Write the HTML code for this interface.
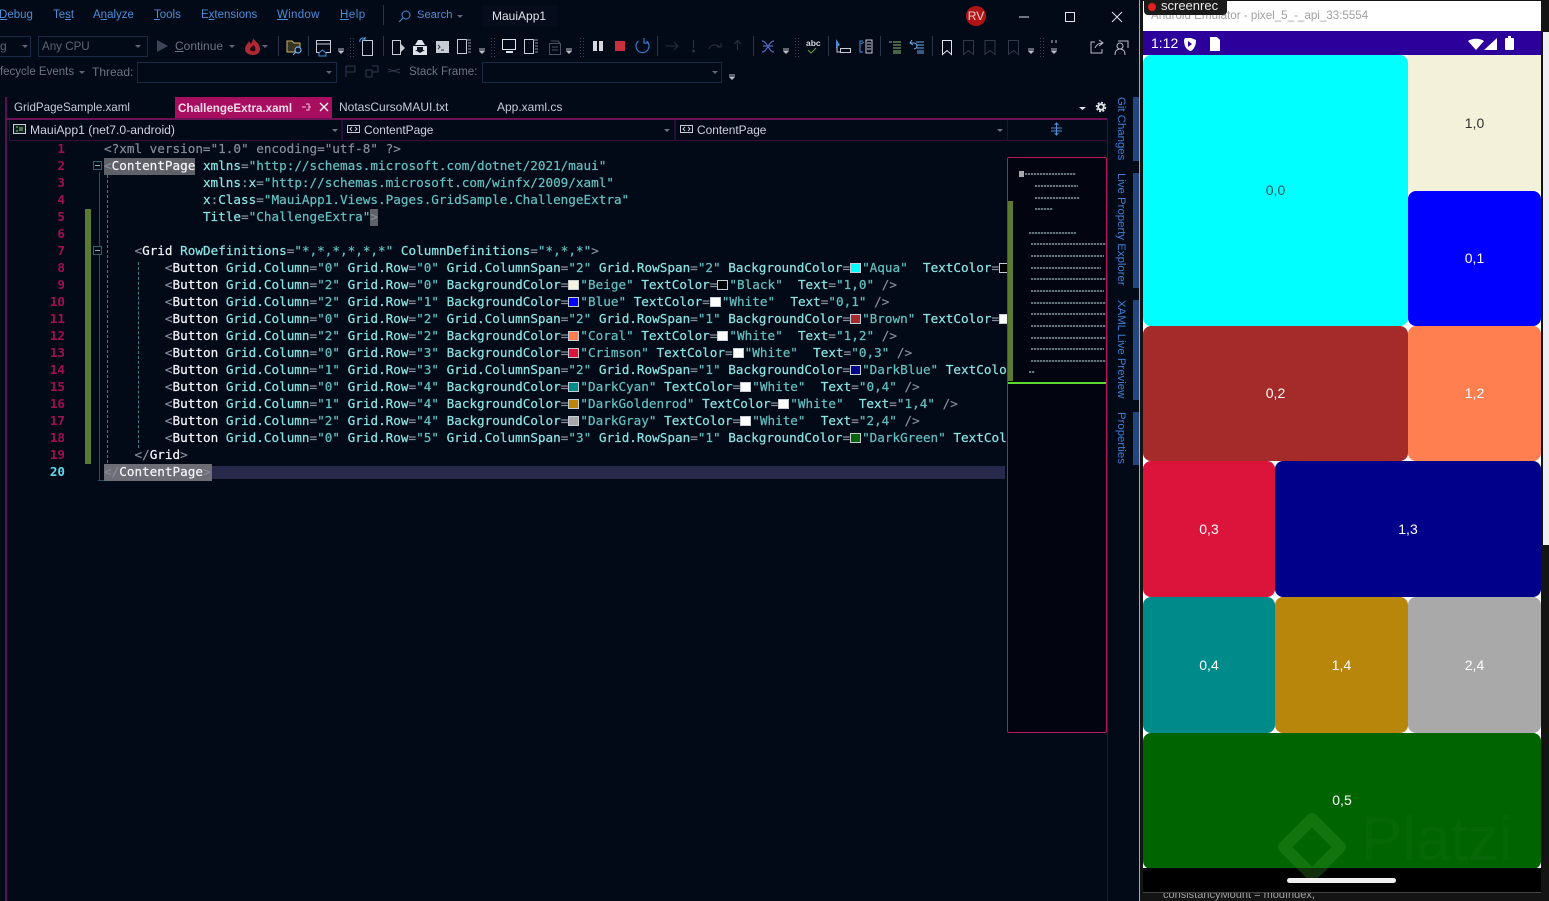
<!DOCTYPE html>
<html><head><meta charset="utf-8"><title>MauiApp1</title>
<style>
html,body{margin:0;padding:0;width:1549px;height:901px;overflow:hidden;background:#020917}
*{box-sizing:border-box}
.a{position:absolute;white-space:nowrap}
body{font-family:"Liberation Sans",sans-serif;font-size:12px;color:#8f97a8}
.m{color:#4a8fd8;top:9px;font-size:11.5px}
.d{color:#5d6677}
.box{position:absolute;border:1px solid #1b2a44}
#code{position:absolute;left:104px;top:139px;width:903px;height:345px;overflow:hidden;font-family:"DejaVu Sans Mono","Liberation Mono",monospace;font-size:12.65px;color:#64c4c4;-webkit-text-stroke:.2px}
.l{position:absolute;left:0;height:17px;line-height:17px;white-space:pre}
.p{color:#858c9a}.e{color:#f4f5f8}.t{color:#8ce4e4}.v{color:#64c0c0}
.s{display:inline-block;width:11px;height:10px;margin:0 1px -1px 0;border:1px solid #c8ccd4;vertical-align:baseline}
.n{position:absolute;left:19px;width:46px;text-align:right;height:17px;line-height:17px;font-family:"DejaVu Sans Mono",monospace;font-size:12.6px;font-weight:bold;color:#a0104f}
.g{position:absolute;display:flex;align-items:center;justify-content:center;border-radius:8px;color:#fff;font-size:14px}
.up{padding-bottom:2px}
.side{position:absolute;writing-mode:vertical-rl;color:#3f80d6;font-size:11.4px;white-space:nowrap}
.sb{position:absolute;left:1133px;width:6px;background:#24467f}
.mini{position:absolute;height:2px;opacity:.6;background:repeating-linear-gradient(90deg,#a5bcc0 0 2px,rgba(60,85,90,.6) 2px 3px)}
</style></head><body>

<!-- menu -->
<div class="a m" style="left:-1px"><u>D</u>ebug</div>
<div class="a m" style="left:53px">Te<u>s</u>t</div>
<div class="a m" style="left:93px">A<u>n</u>alyze</div>
<div class="a m" style="left:154px"><u>T</u>ools</div>
<div class="a m" style="left:201px">E<u>x</u>tensions</div>
<div class="a m" style="left:277px;letter-spacing:.3px"><u>W</u>indow</div>
<div class="a m" style="left:340px;letter-spacing:.5px"><u>H</u>elp</div>
<div class="a" style="left:383px;top:5px;width:1px;height:20px;background:#2a3448"></div>
<div class="a m" style="left:417px;font-size:11.2px">Search</div>
<div class="a" style="left:482px;top:5px;width:76px;height:22px;background:#050d1c;color:#dfe3ea;padding:4px 10px;font-size:12px">MauiApp1</div>
<div class="a" style="left:966px;top:6px;width:20px;height:20px;border-radius:50%;background:#b01414;color:#f2d0d0;font-size:12px;text-align:center;line-height:20px">RV</div>

<!-- toolbar rows -->
<div class="box" style="left:-2px;top:36px;width:33px;height:21px"></div>
<div class="a d" style="left:0;top:39px;font-size:12px">g</div>
<div class="box" style="left:38px;top:36px;width:110px;height:21px"></div>
<div class="a d" style="left:42px;top:40px;font-size:11.6px">Any CPU</div>
<div class="a d" style="left:175px;top:39px;color:#6c7485"><u>C</u>ontinue</div>
<div class="a d" style="left:-9px;top:66px;color:#6c7485;font-size:11.5px">Lifecycle Events</div>
<div class="a d" style="left:92px;top:65px;color:#6c7485">Thread:</div>
<div class="box" style="left:137px;top:62px;width:200px;height:21px"></div>
<div class="a d" style="left:409px;top:66px;color:#6c7485;font-size:11.5px">Stack Frame:</div>
<div class="box" style="left:482px;top:62px;width:240px;height:21px"></div>

<svg class="a" style="left:0;top:0" width="1140" height="140" viewBox="0 0 1140 140" fill="none">
 <circle cx="406" cy="15" r="4" stroke="#4a8fd8"/><path d="M403 18l-4 4" stroke="#4a8fd8"/>
 <path d="M1019 17h10" stroke="#dfe3ea"/><rect x="1065.500" y="12.500" width="9" height="9" stroke="#dfe3ea"/><path d="M1112 12l10 10M1122 12l-10 10" stroke="#dfe3ea"/>
 <!-- dropdown arrows -->
 <path d="M22 45h6l-3 3zM135 45h6l-3 3zM229 45h6l-3 3zM262 45h6l-3 3zM79 71h6l-3 3zM326 71h6l-3 3zM712 71h6l-3 3zM457 15h6l-3 3z" fill="#5c6678"/>
 <path d="M157 40l11 6-11 6z" fill="#3a4557"/>
 <path d="M253 38c2 4 7 5 7 11 0 4-3 6-7 6s-8-2-8-6c0-4 3-5 4-8 1 1 1 2 2 3 1-2 2-4 2-6z" fill="#b02a35"/><path d="M253 45c2 1 3 3 2 6-2 1-5 0-5-2 0-2 3-2 3-4z" fill="#2a0a12"/>
 <!-- separators -->
 <path d="M278.500 36v20M308.500 36v20M383.500 36v20M657.500 36v20M753.500 36v20M828.500 36v20M880.500 36v20M932.500 36v20" stroke="#2a3448"/>
 <!-- grips -->
 <path d="M350.500 38v19M353.500 38v19M491.500 38v19M494.500 38v19M580.500 38v19M583.500 38v19M795.500 38v19M798.500 38v19M1040.500 38v19M1043.500 38v19" stroke="#3a4557" stroke-dasharray="1 2"/>
 <!-- small overflow arrows -->
 <path d="M338 49h6M338 51h6M339 52h4M340 53h2M479 49h6M479 51h6M480 52h4M481 53h2M566 49h6M566 51h6M567 52h4M568 53h2M783 49h6M783 51h6M784 52h4M785 53h2M1028 49h6M1028 51h6M1029 52h4M1030 53h2M1051 49h6M1051 51h6M1052 52h4M1053 53h2M729 75h6M729 77h6M730 78h4M731 79h2" stroke="#b9bec8"/>
 <path d="M1052 40v3M1056 40v3" stroke="#b9bec8"/>
 <!-- folder -->
 <path d="M287 41h5l2 2h6v9h-13z" fill="#3a3520" stroke="#c8b26d"/><circle cx="298" cy="50" r="3" stroke="#6fb0ec" stroke-width="1.200" fill="#0a1424"/><path d="M296 52l-3 3" stroke="#6fb0ec"/>
 <!-- window -->
 <rect x="316.500" y="40.500" width="14" height="12" stroke="#c8ccd4"/><path d="M317 44h13" stroke="#c8ccd4"/><path d="M319 53l3.500-3 3.500 3v3h-7z" stroke="#4a8fd8" fill="#020917"/>
 <rect x="362.500" y="40.500" width="10" height="15" stroke="#c8ccd4"/><path d="M360 42a3 3 0 0 1 5-3M365 37v3h-3" stroke="#5aa0e8" fill="#020917"/>
 <rect x="392.500" y="40.500" width="8" height="14" stroke="#c8ccd4"/><path d="M401 44l4 4-4 4z" fill="#c8ccd4"/>
 <path d="M413 46h14v9h-14z" fill="#dfe3ea"/><path d="M415 45l3-5h4l3 5z" fill="#dfe3ea"/><path d="M417 47h6v3h2l-5 3-5-3h2z" fill="#101624"/>
 <rect x="436" y="41" width="13" height="12" fill="#c8ccd4"/><path d="M438 45l2 2-2 2M441 50h3" stroke="#2a3448"/>
 <rect x="457.500" y="39.500" width="9" height="14" stroke="#c8ccd4"/><path d="M466 40h5M468 43h3M468 46h3M468 49h3M468 52h3" stroke="#8a93a3"/>
 <rect x="502.500" y="39.500" width="13" height="10" stroke="#dfe3ea"/><path d="M506 52h7" stroke="#dfe3ea" stroke-width="2"/>
 <rect x="524.500" y="39.500" width="9" height="14" stroke="#c8ccd4"/><path d="M533 40h5M535 43h3M535 46h3M535 49h3M535 52h3" stroke="#8a93a3"/>
 <rect x="549.500" y="43.500" width="11" height="11" stroke="#4a5365"/><path d="M551 41h7l2 2M552 47h6M552 50h6" stroke="#4a5365"/>
 <rect x="593" y="41" width="4" height="10" fill="#d5d8de"/><rect x="599" y="41" width="4" height="10" fill="#d5d8de"/>
 <rect x="615" y="41" width="10" height="10" fill="#c7303c"/>
 <path d="M638.500 41a6.500 6.500 0 1 0 8 0M644 38v5h4" stroke="#3a78c8" stroke-width="1.200"/>
 <path d="M666 46h12M674 42l4 4-4 4M693.500 40v8M737.500 41v9M734 44l3.500-3.500 3.500 3.500M709 49c2-5 7-5 11-2M721 43v4h-4" stroke="#263245"/>
 <circle cx="693.500" cy="51" r="1.500" fill="#263245"/>
 <path d="M762 41c5 0 7 11 12 11M762 52c5 0 7-11 12-11M763 46h10" stroke="#4d6ab8" stroke-width="1.200"/>
 <text x="806" y="46" font-size="8.500" fill="#d5d8de" font-family="Liberation Sans" font-weight="bold">abc</text><path d="M808 50l3 3 5-5" stroke="#63a04a"/>
 <path d="M836 39v9l4-3z" fill="#4a8fd8"/><rect x="840.500" y="48.500" width="10" height="4" stroke="#c8ccd4"/><path d="M837 47v5h3" stroke="#c8ccd4"/>
 <path d="M863 41h-3v11h3M861 44l3-2" stroke="#4a8fd8"/><path d="M866 40h6v13h-6zM867 43h4M867 46h4M867 49h4" stroke="#c8ccd4"/>
 <path d="M889 42h3M893 42h8M893 45h8M893 48h8M893 51h8M893 53h8" stroke="#8fbe7a"/>
 <path d="M912 40l-2 3 3 2M910 43h4a3 3 0 0 1 0 6M916 42h8M917 45h7M917 48h7M917 51h7M917 53h7" stroke="#6fa8e8"/>
 <path d="M942.500 40.500h9v14l-4.500-4-4.500 4z" stroke="#dfe3ea"/>
 <path d="M963.500 40.500h10v14l-5-4-5 4zM985 40.500h10v14l-5-4-5 4zM1008.500 40.500h10v14l-5-4-5 4z" stroke="#2f3a4d"/>
 <path d="M1095 42h-4v11h11v-4M1095 48c1-3 4-5 7-5M1099 40l4 3-4 3" stroke="#b9bec8"/>
 <path d="M1118 41h10v7M1115 55c0-4 2-6 5-6s5 2 5 6" stroke="#b9bec8"/><circle cx="1120" cy="46" r="3" stroke="#b9bec8"/>
 <path d="M346 66v11M346 66h9v6h-9M366 70h6v7h-6zM372 66h6v6h-6M388 72l12-3M388 69l12 4" stroke="#2f3a4d"/>
 <path d="M1079 107h7l-3.500 3z" fill="#e0e2e8"/>
 <circle cx="1101" cy="107" r="2.800" stroke="#e0e2e8" stroke-width="2"/><circle cx="1101" cy="107" r="4.500" stroke="#e0e2e8" stroke-width="1.500" stroke-dasharray="2 1.500"/>
 <path d="M302 107h4M305.500 105h3v5h-3M308 107.500h2" stroke="#f3c0d8"/>
 <path d="M320 103l8 8M328 103l-8 8" stroke="#fff" stroke-width="1.300"/>
 <path d="M1056.500 123v12M1051 128h11M1051 131h11M1054.500 125l2-2 2 2M1054.500 133l2 2 2-2" stroke="#4a8fd8"/>
 <path d="M1053 151h8l-4-5z" fill="#9a1460"/>
 <path d="M332 129h6l-3 3zM664 129h6l-3 3zM997 129h6l-3 3z" fill="#6c7485"/>
 <rect x="13.500" y="124.500" width="12" height="9" stroke="#c8ccd4" fill="#102020"/><path d="M16 127h2M16 131h2M20 127v4M22 127v4" stroke="#7fd08a"/>
 <rect x="347.500" y="125.500" width="12" height="7" stroke="#c8ccd4"/><path d="M352 127l-2 2 2 2M355 127l2 2-2 2" stroke="#c8ccd4"/>
 <rect x="680.500" y="125.500" width="12" height="7" stroke="#c8ccd4"/><path d="M685 127l-2 2 2 2M688 127l2 2-2 2" stroke="#c8ccd4"/>
</svg>

<!-- tabs -->
<div class="a" style="left:14px;top:101px;color:#c4ccd8;font-size:11.6px">GridPageSample.xaml</div>
<div class="a" style="left:175px;top:97px;width:157px;height:22px;background:#a80e60;color:#f4dbe8;font-size:11.6px;font-weight:bold;padding:5px 3px">ChallengeExtra.xaml</div>
<svg class="a" style="left:296px;top:100px" width="36" height="16" fill="none"><path d="M6 7h4M10 4h3v6h-3M13 7h2" stroke="#f3c0d8"/><path d="M24 3l8 8M32 3l-8 8" stroke="#fff" stroke-width="1.300"/></svg>
<div class="a" style="left:339px;top:100px;color:#c4ccd8;font-size:12px">NotasCursoMAUI.txt</div>
<div class="a" style="left:497px;top:100px;color:#c4ccd8;font-size:12px">App.xaml.cs</div>

<!-- frame -->
<div class="a" style="left:5px;top:97px;width:2px;height:804px;background:#5a1050"></div>
<div class="a" style="left:5px;top:118px;width:1103px;height:2px;background:#6a1258"></div>
<div class="a" style="left:9px;top:140px;width:1099px;height:1px;background:#3a0c40"></div>
<div class="a" style="left:1107px;top:118px;width:1px;height:783px;background:#3a0c40"></div>
<div class="a" style="left:9px;top:120px;width:1px;height:20px;background:#3a0c40"></div>
<div class="a" style="left:341px;top:120px;width:2px;height:20px;background:#2a0c3c"></div>
<div class="a" style="left:674px;top:120px;width:2px;height:20px;background:#2a0c3c"></div>
<div class="a" style="left:1007px;top:120px;width:1px;height:20px;background:#2a0c3c"></div>

<div class="a" style="left:30px;top:123px;color:#cdd3dd;font-size:12.2px">MauiApp1 (net7.0-android)</div>
<div class="a" style="left:364px;top:123px;color:#cdd3dd;font-size:11.9px">ContentPage</div>
<div class="a" style="left:697px;top:123px;color:#cdd3dd;font-size:11.9px">ContentPage</div>

<!-- gutter -->
<div class="a" style="left:85px;top:209px;width:6px;height:255px;background:#5b7a32"></div>
<div class="a" style="left:98.500px;top:172px;width:1px;height:308px;background:#1f5560"></div>
<div class="a" style="left:98px;top:480px;width:6px;height:1px;background:#1f5560"></div>
<div class="a" style="left:107px;top:175px;width:0;height:288px;border-left:1px dashed #3c7f88"></div>
<div class="a" style="left:138px;top:262px;width:0;height:186px;border-left:1px dashed #3c7f88"></div>
<div class="a" style="left:93px;top:161px;width:9px;height:9px;border:1px solid #2a6570;background:#020917"></div>
<div class="a" style="left:95px;top:165px;width:5px;height:1px;background:#7fb8c0"></div>
<div class="a" style="left:93px;top:246px;width:9px;height:9px;border:1px solid #2a6570;background:#020917"></div>
<div class="a" style="left:95px;top:250px;width:5px;height:1px;background:#7fb8c0"></div>

<div class="n" style="top:140px">1</div><div class="n" style="top:157px">2</div><div class="n" style="top:174px">3</div><div class="n" style="top:191px">4</div><div class="n" style="top:208px">5</div><div class="n" style="top:225px">6</div><div class="n" style="top:242px">7</div><div class="n" style="top:259px">8</div><div class="n" style="top:276px">9</div><div class="n" style="top:293px">10</div><div class="n" style="top:310px">11</div><div class="n" style="top:327px">12</div><div class="n" style="top:344px">13</div><div class="n" style="top:361px">14</div><div class="n" style="top:378px">15</div><div class="n" style="top:395px">16</div><div class="n" style="top:412px">17</div><div class="n" style="top:429px">18</div><div class="n" style="top:446px">19</div><div class="n" style="top:463px;color:#5fdcec">20</div>

<!-- highlights -->
<div class="a" style="left:104px;top:466px;width:901px;height:13px;background:#28294a"></div>
<div class="a" style="left:104px;top:158px;width:91px;height:17px;background:#5f6168"></div>
<div class="a" style="left:370px;top:209px;width:8px;height:17px;background:#5f6168"></div>
<div class="a" style="left:104px;top:464px;width:108px;height:17px;background:#6c6d75"></div>

<div id="code">
<div class="l" style="top:1px;color:#858c9a">&lt;?xml version="1.0" encoding="utf-8" ?&gt;</div>
<div class="l" style="top:18px"><span class="p">&lt;</span><span class="e">ContentPage</span> <span class="t">xmlns</span><span class="p">=</span><span class="v">"http://schemas.microsoft.com/dotnet/2021/maui"</span></div>
<div class="l" style="top:35px">             <span class="t">xmlns</span><span class="p">:</span><span class="t">x</span><span class="p">=</span><span class="v">"http://schemas.microsoft.com/winfx/2009/xaml"</span></div>
<div class="l" style="top:52px">             <span class="t">x</span><span class="p">:</span><span class="t">Class</span><span class="p">=</span><span class="v">"MauiApp1.Views.Pages.GridSample.ChallengeExtra"</span></div>
<div class="l" style="top:69px">             <span class="t">Title</span><span class="p">=</span><span class="v">"ChallengeExtra"</span><span class="p">&gt;</span></div>
<div class="l" style="top:103px">    <span class="p">&lt;</span><span class="e">Grid</span> <span class="t">RowDefinitions</span><span class="p">=</span><span class="v">"*,*,*,*,*,*"</span> <span class="t">ColumnDefinitions</span><span class="p">=</span><span class="v">"*,*,*"</span><span class="p">&gt;</span></div>
<div class="l" style="top:120px">        <span class="p">&lt;</span><span class="e">Button</span> <span class="t">Grid.Column</span><span class="p">=</span><span class="v">"0"</span> <span class="t">Grid.Row</span><span class="p">=</span><span class="v">"0"</span> <span class="t">Grid.ColumnSpan</span><span class="p">=</span><span class="v">"2"</span> <span class="t">Grid.RowSpan</span><span class="p">=</span><span class="v">"2"</span> <span class="t">BackgroundColor</span><span class="p">=</span><span class="s" style="background:#0ff"></span><span class="v">"Aqua"</span>  <span class="t">TextColor</span><span class="p">=</span><span class="s" style="background:#000"></span><span class="v">"Black"</span></div>
<div class="l" style="top:137px">        <span class="p">&lt;</span><span class="e">Button</span> <span class="t">Grid.Column</span><span class="p">=</span><span class="v">"2"</span> <span class="t">Grid.Row</span><span class="p">=</span><span class="v">"0"</span> <span class="t">BackgroundColor</span><span class="p">=</span><span class="s" style="background:#f5f5dc"></span><span class="v">"Beige"</span> <span class="t">TextColor</span><span class="p">=</span><span class="s" style="background:#000"></span><span class="v">"Black"</span>  <span class="t">Text</span><span class="p">=</span><span class="v">"1,0"</span> <span class="p">/&gt;</span></div>
<div class="l" style="top:154px">        <span class="p">&lt;</span><span class="e">Button</span> <span class="t">Grid.Column</span><span class="p">=</span><span class="v">"2"</span> <span class="t">Grid.Row</span><span class="p">=</span><span class="v">"1"</span> <span class="t">BackgroundColor</span><span class="p">=</span><span class="s" style="background:#00f"></span><span class="v">"Blue"</span> <span class="t">TextColor</span><span class="p">=</span><span class="s" style="background:#fff"></span><span class="v">"White"</span>  <span class="t">Text</span><span class="p">=</span><span class="v">"0,1"</span> <span class="p">/&gt;</span></div>
<div class="l" style="top:171px">        <span class="p">&lt;</span><span class="e">Button</span> <span class="t">Grid.Column</span><span class="p">=</span><span class="v">"0"</span> <span class="t">Grid.Row</span><span class="p">=</span><span class="v">"2"</span> <span class="t">Grid.ColumnSpan</span><span class="p">=</span><span class="v">"2"</span> <span class="t">Grid.RowSpan</span><span class="p">=</span><span class="v">"1"</span> <span class="t">BackgroundColor</span><span class="p">=</span><span class="s" style="background:#a52a2a"></span><span class="v">"Brown"</span> <span class="t">TextColor</span><span class="p">=</span><span class="s" style="background:#fff"></span><span class="v">"White"</span></div>
<div class="l" style="top:188px">        <span class="p">&lt;</span><span class="e">Button</span> <span class="t">Grid.Column</span><span class="p">=</span><span class="v">"2"</span> <span class="t">Grid.Row</span><span class="p">=</span><span class="v">"2"</span> <span class="t">BackgroundColor</span><span class="p">=</span><span class="s" style="background:#ff7f50"></span><span class="v">"Coral"</span> <span class="t">TextColor</span><span class="p">=</span><span class="s" style="background:#fff"></span><span class="v">"White"</span>  <span class="t">Text</span><span class="p">=</span><span class="v">"1,2"</span> <span class="p">/&gt;</span></div>
<div class="l" style="top:205px">        <span class="p">&lt;</span><span class="e">Button</span> <span class="t">Grid.Column</span><span class="p">=</span><span class="v">"0"</span> <span class="t">Grid.Row</span><span class="p">=</span><span class="v">"3"</span> <span class="t">BackgroundColor</span><span class="p">=</span><span class="s" style="background:#dc143c"></span><span class="v">"Crimson"</span> <span class="t">TextColor</span><span class="p">=</span><span class="s" style="background:#fff"></span><span class="v">"White"</span>  <span class="t">Text</span><span class="p">=</span><span class="v">"0,3"</span> <span class="p">/&gt;</span></div>
<div class="l" style="top:222px">        <span class="p">&lt;</span><span class="e">Button</span> <span class="t">Grid.Column</span><span class="p">=</span><span class="v">"1"</span> <span class="t">Grid.Row</span><span class="p">=</span><span class="v">"3"</span> <span class="t">Grid.ColumnSpan</span><span class="p">=</span><span class="v">"2"</span> <span class="t">Grid.RowSpan</span><span class="p">=</span><span class="v">"1"</span> <span class="t">BackgroundColor</span><span class="p">=</span><span class="s" style="background:#00008b"></span><span class="v">"DarkBlue"</span> <span class="t">TextColor</span><span class="p">=</span></div>
<div class="l" style="top:239px">        <span class="p">&lt;</span><span class="e">Button</span> <span class="t">Grid.Column</span><span class="p">=</span><span class="v">"0"</span> <span class="t">Grid.Row</span><span class="p">=</span><span class="v">"4"</span> <span class="t">BackgroundColor</span><span class="p">=</span><span class="s" style="background:#008b8b"></span><span class="v">"DarkCyan"</span> <span class="t">TextColor</span><span class="p">=</span><span class="s" style="background:#fff"></span><span class="v">"White"</span>  <span class="t">Text</span><span class="p">=</span><span class="v">"0,4"</span> <span class="p">/&gt;</span></div>
<div class="l" style="top:256px">        <span class="p">&lt;</span><span class="e">Button</span> <span class="t">Grid.Column</span><span class="p">=</span><span class="v">"1"</span> <span class="t">Grid.Row</span><span class="p">=</span><span class="v">"4"</span> <span class="t">BackgroundColor</span><span class="p">=</span><span class="s" style="background:#b8860b"></span><span class="v">"DarkGoldenrod"</span> <span class="t">TextColor</span><span class="p">=</span><span class="s" style="background:#fff"></span><span class="v">"White"</span>  <span class="t">Text</span><span class="p">=</span><span class="v">"1,4"</span> <span class="p">/&gt;</span></div>
<div class="l" style="top:273px">        <span class="p">&lt;</span><span class="e">Button</span> <span class="t">Grid.Column</span><span class="p">=</span><span class="v">"2"</span> <span class="t">Grid.Row</span><span class="p">=</span><span class="v">"4"</span> <span class="t">BackgroundColor</span><span class="p">=</span><span class="s" style="background:#a9a9a9"></span><span class="v">"DarkGray"</span> <span class="t">TextColor</span><span class="p">=</span><span class="s" style="background:#fff"></span><span class="v">"White"</span>  <span class="t">Text</span><span class="p">=</span><span class="v">"2,4"</span> <span class="p">/&gt;</span></div>
<div class="l" style="top:290px">        <span class="p">&lt;</span><span class="e">Button</span> <span class="t">Grid.Column</span><span class="p">=</span><span class="v">"0"</span> <span class="t">Grid.Row</span><span class="p">=</span><span class="v">"5"</span> <span class="t">Grid.ColumnSpan</span><span class="p">=</span><span class="v">"3"</span> <span class="t">Grid.RowSpan</span><span class="p">=</span><span class="v">"1"</span> <span class="t">BackgroundColor</span><span class="p">=</span><span class="s" style="background:#006400"></span><span class="v">"DarkGreen"</span> <span class="t">TextColor</span><span class="p">=</span></div>
<div class="l" style="top:307px">    <span class="p">&lt;/</span><span class="e">Grid</span><span class="p">&gt;</span></div>
<div class="l" style="top:324px"><span class="p">&lt;/</span><span class="e">ContentPage</span><span class="p">&gt;</span></div>
</div>

<!-- minimap -->
<div class="a" style="left:1007px;top:157px;width:100px;height:576px;border:1px solid #b8175f;border-radius:2px;background:#02050f;overflow:hidden">
 <div class="a" style="left:0;top:43px;width:5px;height:180px;background:#5b7a32"></div>
 <div class="a" style="left:0;top:224px;width:98px;height:2px;background:#5ed82f"></div>
 <div class="a" style="left:11px;top:13px;width:5px;height:6px;background:#a8a8a8"></div>
 <div class="mini" style="left:17px;top:15px;width:51px"></div>
 <div class="mini" style="left:27px;top:27px;width:43px"></div>
 <div class="mini" style="left:27px;top:39px;width:45px"></div>
 <div class="mini" style="left:27px;top:50px;width:18px"></div>
 <div class="mini" style="left:21px;top:74px;width:47px"></div>
 <div class="mini" style="left:23px;top:85px;width:75px"></div>
 <div class="mini" style="left:23px;top:97px;width:73px"></div>
 <div class="mini" style="left:23px;top:109px;width:70px"></div>
 <div class="mini" style="left:23px;top:120px;width:75px"></div>
 <div class="mini" style="left:23px;top:132px;width:73px"></div>
 <div class="mini" style="left:23px;top:144px;width:75px"></div>
 <div class="mini" style="left:23px;top:155px;width:75px"></div>
 <div class="mini" style="left:23px;top:167px;width:75px"></div>
 <div class="mini" style="left:23px;top:179px;width:75px"></div>
 <div class="mini" style="left:23px;top:190px;width:73px"></div>
 <div class="mini" style="left:23px;top:202px;width:75px"></div>
 <div class="mini" style="left:21px;top:213px;width:6px"></div>
</div>

<!-- side tabs -->
<div class="sb" style="top:97px;height:64px"></div>
<div class="sb" style="top:173px;height:115px"></div>
<div class="sb" style="top:300px;height:100px"></div>
<div class="sb" style="top:412px;height:53px"></div>
<div class="side" style="left:1115px;top:97px">Git Changes</div>
<div class="side" style="left:1115px;top:173px">Live Property Explorer</div>
<div class="side" style="left:1115px;top:300px">XAML Live Preview</div>
<div class="side" style="left:1115px;top:412px">Properties</div>

<!-- emulator -->
<div class="a" style="left:1139px;top:0;width:1px;height:901px;background:#9fb08a"></div>
<div class="a" style="left:1140px;top:0;width:409px;height:901px;background:#141414"></div>
<div class="a" style="left:1163px;top:889px;color:#a0a0a0;font-size:11px">consistancyMount = modIndex,</div>
<div class="a" style="left:1543px;top:32px;width:6px;height:513px;background:#eeeef3"></div>
<div class="a" style="left:1143px;top:1px;width:398px;height:30px;background:#fff"></div>
<div class="a" style="left:1151px;top:9px;color:#a0a0a0;font-size:11.6px">Android Emulator - pixel_5_-_api_33:5554</div>
<div class="a" style="left:1144px;top:0;width:83px;height:15px;background:#1b1b1b;border-radius:0 0 4px 4px;color:#e8e8e8;font-size:13px;line-height:12px;padding-left:17px">screenrec</div>
<div class="a" style="left:1148px;top:3px;width:8px;height:8px;border-radius:50%;background:#e02020"></div>
<div class="a" style="left:1143px;top:31px;width:398px;height:24px;background:#2c009a"></div>
<div class="a" style="left:1151px;top:35px;color:#fff;font-size:14px">1:12</div>
<svg class="a" style="left:1143px;top:31px" width="398" height="24" fill="#fff">
 <path d="M42 7h6l5 2c0 6-2 9-5 11h-1c-4-2-6-5-6-11z"/><path d="M45 10l4 3-4 3z" fill="#2c009a"/>
 <path d="M67 6h7l3 3v11h-10z"/>
 <path d="M325 10c4-3 12-3 16 0l-8 9z"/>
 <path d="M341 19l13-12v12z"/>
 <rect x="362" y="7" width="9" height="12" rx="1"/><rect x="365" y="5" width="3" height="2"/>
</svg>
<div class="a" style="left:1143px;top:55px;width:398px;height:814px;background:#fff"></div>
<div class="g up" style="left:1143px;top:55px;width:265px;height:271px;background:#0ff;color:#2a5a5a">0,0</div>
<div class="g" style="left:1408px;top:55px;width:133px;height:136px;background:#f3f1da;color:#333;border-radius:0">1,0</div>
<div class="g up" style="left:1408px;top:191px;width:133px;height:135px;background:#00f">0,1</div>
<div class="g up" style="left:1143px;top:326px;width:265px;height:135px;background:#a52a2a">0,2</div>
<div class="g up" style="left:1408px;top:326px;width:133px;height:135px;background:#ff7f50">1,2</div>
<div class="g" style="left:1143px;top:461px;width:132px;height:136px;background:#dc143c">0,3</div>
<div class="g" style="left:1275px;top:461px;width:266px;height:136px;background:#00008b">1,3</div>
<div class="g" style="left:1143px;top:597px;width:132px;height:136px;background:#008b8b">0,4</div>
<div class="g" style="left:1275px;top:597px;width:133px;height:136px;background:#b8860b">1,4</div>
<div class="g" style="left:1408px;top:597px;width:133px;height:136px;background:#a9a9a9">2,4</div>
<div class="g up" style="left:1143px;top:733px;width:398px;height:136px;background:#006400">0,5</div>
<div class="a" style="left:1143px;top:868px;width:398px;height:25px;background:#000;border-bottom:1px solid #444"></div>
<div class="a" style="left:1143px;top:805px;width:398px;height:65px;overflow:hidden;font-size:62px;line-height:70px;color:rgba(255,255,255,.018);padding-left:218px">Platzi</div>
<svg class="a" style="left:1143px;top:790px" width="398" height="105" fill="none"><path d="M178 76l19-19-28-28-28 28 28 28 11-10" stroke="#3c9a28" stroke-opacity=".3" stroke-width="12" stroke-linejoin="round" stroke-linecap="round"/></svg>
<div class="a" style="left:1287px;top:878px;width:109px;height:5px;border-radius:3px;background:#f0f0f0"></div>
</body></html>
